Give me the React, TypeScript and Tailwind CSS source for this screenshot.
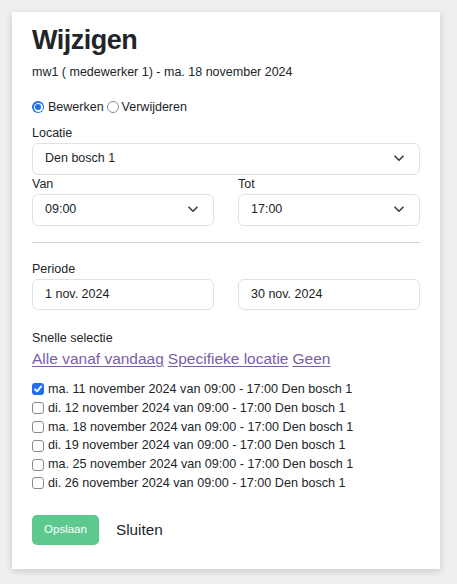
import React from "react";

const font = { fontFamily: '"Liberation Sans", Arial, sans-serif' };

function Chevron() {
  return (
    <svg width="10" height="7" viewBox="0 0 10 7" fill="none" className="block">
      <path d="M1 1.2 L5 5.2 L9 1.2" stroke="#343a40" strokeWidth="1.6" strokeLinecap="round" strokeLinejoin="round" />
    </svg>
  );
}

function Select({ value }: { value: string }) {
  return (
    <div className="h-[31.5px] w-full border border-[#dee2e6] rounded-[6px] bg-white flex items-center justify-between pl-[12px] pr-[15px] text-[12.5px] text-[#212529]">
      <span>{value}</span>
      <Chevron />
    </div>
  );
}

function Input({ value }: { value: string }) {
  return (
    <div className="h-[31.5px] w-full border border-[#dee2e6] rounded-[6px] bg-white flex items-center pl-[12px] text-[12.5px] text-[#212529]">
      {value}
    </div>
  );
}

function Radio({ checked }: { checked: boolean }) {
  return checked ? (
    <span className="block w-[12px] h-[12px] rounded-full bg-[#1f6ff5] flex items-center justify-center shrink-0">
      <span className="block w-[9px] h-[9px] rounded-full bg-white flex items-center justify-center">
        <span className="block w-[6px] h-[6px] rounded-full bg-[#1f6ff5]" />
      </span>
    </span>
  ) : (
    <span className="block w-[12px] h-[12px] rounded-full border border-[#8e8e8e] bg-white shrink-0" />
  );
}

function Checkbox({ checked }: { checked: boolean }) {
  return checked ? (
    <span className="flex w-[12px] h-[12px] rounded-[3px] bg-[#1f6ff5] items-center justify-center shrink-0">
      <svg width="10" height="10" viewBox="0 0 10 10" fill="none" className="block">
        <path d="M2 5.3 L4.1 7.4 L8.2 2.4" stroke="white" strokeWidth="1.8" strokeLinecap="round" strokeLinejoin="round" />
      </svg>
    </span>
  ) : (
    <span className="block w-[12px] h-[12px] rounded-[3px] border border-[#8a8a8a] bg-white shrink-0" />
  );
}

const rows = [
  { d: "ma. 11 november 2024 van 09:00 - 17:00 Den bosch 1", c: true },
  { d: "di. 12 november 2024 van 09:00 - 17:00 Den bosch 1", c: false },
  { d: "ma. 18 november 2024 van 09:00 - 17:00 Den bosch 1", c: false },
  { d: "di. 19 november 2024 van 09:00 - 17:00 Den bosch 1", c: false },
  { d: "ma. 25 november 2024 van 09:00 - 17:00 Den bosch 1", c: false },
  { d: "di. 26 november 2024 van 09:00 - 17:00 Den bosch 1", c: false },
];

export default function App() {
  return (
    <div className="min-h-[584px] w-[457px] bg-[#efefef] pt-[12px] pl-[12px]" style={font}>
      <div className="w-[428px] bg-white pt-[12px] pb-[24px] px-[20px] shadow-[0_2px_7px_rgba(0,0,0,0.16)] text-[#212529]">
        <h2 className="text-[27px] leading-[32px] font-bold tracking-[-0.5px]">Wijzigen</h2>
        <div className="mt-[7px] text-[12.5px] leading-[18px]">mw1 ( medewerker 1) - ma. 18 november 2024</div>

        <div className="mt-[17px] flex items-center h-[18px] text-[12.5px]">
          <Radio checked />
          <span className="ml-[4px]">Bewerken</span>
          <span className="ml-[3px]"><Radio checked={false} /></span>
          <span className="ml-[3px]">Verwijderen</span>
        </div>

        <div className="mt-[8px] text-[12.5px] leading-[18px]">Locatie</div>
        <div className="mt-[1px]">
          <Select value="Den bosch 1" />
        </div>

        <div className="grid grid-cols-2 gap-x-[24px]">
          <div>
            <div className="text-[12.5px] leading-[19.5px]">Van</div>
            <Select value="09:00" />
          </div>
          <div>
            <div className="text-[12.5px] leading-[19.5px]">Tot</div>
            <Select value="17:00" />
          </div>
        </div>

        <div className="mt-[16px] h-px bg-[#cfcfd4]" />

        <div className="mt-[17px] text-[12.5px] leading-[18px]">Periode</div>
        <div className="mt-[1px] grid grid-cols-2 gap-x-[24px]">
          <Input value="1 nov. 2024" />
          <Input value="30 nov. 2024" />
        </div>

        <div className="mt-[19px] text-[12.5px] leading-[18px]">Snelle selectie</div>
        <div className="mt-[1px] text-[15.5px] leading-[22px] flex gap-x-[4px] text-[#7b5ea7]">
          <a className="underline underline-offset-[2px] decoration-[1px]" href="#">Alle vanaf vandaag</a>
          <a className="underline underline-offset-[2px] decoration-[1px]" href="#">Specifieke locatie</a>
          <a className="underline underline-offset-[2px] decoration-[1px]" href="#">Geen</a>
        </div>

        <div className="mt-[10px] flex flex-col">
          {rows.map((r) => (
            <div key={r.d} className="flex items-center h-[18.8px] text-[12.6px]">
              <Checkbox checked={r.c} />
              <span className="ml-[4px]">{r.d}</span>
            </div>
          ))}
        </div>

        <div className="mt-[22px] flex items-center">
          <button className="h-[30.5px] w-[67px] rounded-[5px] bg-[#5ec98f] text-white text-[11.5px]">Opslaan</button>
          <span className="ml-[17px] text-[15.3px]">Sluiten</span>
        </div>
      </div>
    </div>
  );
}
